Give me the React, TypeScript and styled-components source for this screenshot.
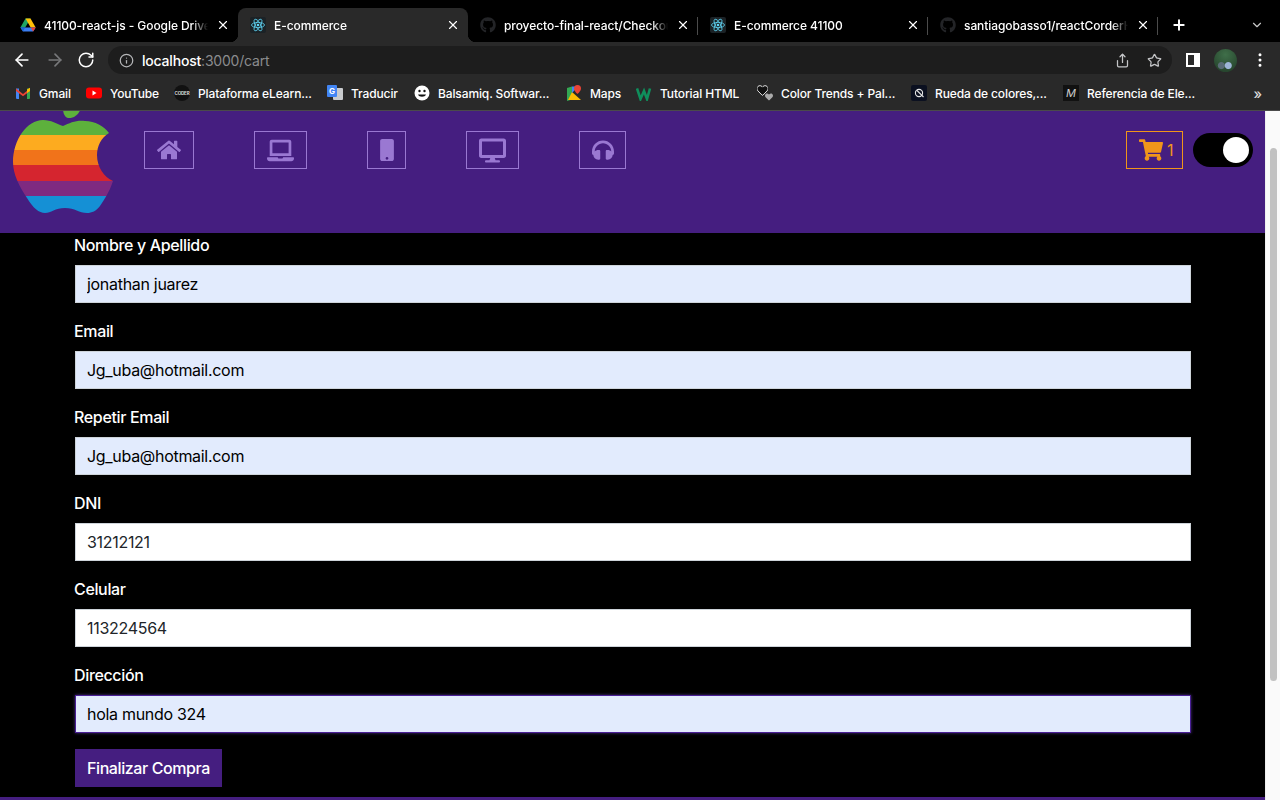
import React, { FC, ReactNode } from "react";
import styled, { createGlobalStyle } from "styled-components";
import {
  FaGithub,
  FaHeadphones,
  FaHeart,
  FaHome,
  FaLaptop,
  FaMobile,
  FaDesktop,
  FaShoppingCart,
} from "react-icons/fa";
import {
  ArrowLeft,
  ArrowRight,
  ChevronDown,
  EllipsisVertical,
  Info,
  Plus,
  RotateCw,
  Share,
  Star,
  X,
} from "lucide-react";

const PURPLE = "#451e80";
const SOFT_PURPLE = "#9a78d2";
const ORANGE = "#f0951a";
const CHROME = "#292929";

const GlobalStyle = createGlobalStyle`
  html, body {
    margin: 0;
    height: 100%;
    overflow: hidden;
    background: #000;
  }
  * { box-sizing: border-box; }
  body {
    font-family: Inter, "Liberation Sans", sans-serif;
  }
`;

const Window = styled.div`
  width: 1280px;
  height: 800px;
  display: flex;
  flex-direction: column;
  overflow: hidden;
  background: #000;
`;

/* browser chrome */

const TabStrip = styled.div`
  height: 42px;
  padding: 8px 0 0 8px;
  display: flex;
  background: #000;
  color: #fff;
`;

const Tab = styled.div<{ $active?: boolean; $divider?: boolean }>`
  position: relative;
  width: 230px;
  height: 34px;
  padding: 0 8px 0 12px;
  display: flex;
  align-items: center;
  gap: 8px;
  font-size: 12px;
  font-weight: 500;
  letter-spacing: -0.08px;
  border-radius: 8px 8px 0 0;
  background: ${(p) => (p.$active ? CHROME : "transparent")};

  ${(p) =>
    p.$divider &&
    `&::after {
      content: "";
      position: absolute;
      right: 0;
      top: 9px;
      width: 1px;
      height: 18px;
      background: #4b4b4b;
    }`}

  ${(p) =>
    p.$active &&
    `&::before, &::after {
      content: "";
      position: absolute;
      bottom: 0;
      width: 8px;
      height: 8px;
    }
    &::before {
      left: -8px;
      background: radial-gradient(circle at 0 0, transparent 8px, ${CHROME} 8.5px);
    }
    &::after {
      right: -8px;
      background: radial-gradient(circle at 100% 0, transparent 8px, ${CHROME} 8.5px);
    }`}
`;

const TabTitle = styled.span`
  flex: 1;
  min-width: 0;
  white-space: nowrap;
  overflow: hidden;
  -webkit-mask-image: linear-gradient(to right, #000 90%, transparent 100%);
  mask-image: linear-gradient(to right, #000 90%, transparent 100%);
`;

const TabClose = styled(X)`
  flex: none;
  width: 14px;
  height: 14px;
`;

const NewTab = styled(Plus)`
  margin-left: 13px;
  margin-top: 9px;
  width: 16px;
  height: 16px;
  stroke-width: 3;
`;

const TabMenu = styled(ChevronDown)`
  margin-left: 63px;
  margin-top: 10px;
  width: 14px;
  height: 14px;
  color: #c8c8c8;
`;

const Toolbar = styled.div`
  height: 37px;
  padding: 4px 0 5px 12px;
  display: flex;
  align-items: center;
  background: ${CHROME};
  color: #fff;
`;

const NavArrows = styled.div`
  width: 96px;
  display: flex;
  align-items: center;
  gap: 12.5px;
`;

const AddressBar = styled.div`
  width: 1064px;
  height: 28px;
  padding: 0 8px 0 11px;
  display: flex;
  align-items: center;
  border-radius: 14px;
  background: #1d1d1d;
  font-size: 14px;
  font-weight: 500;
  color: #fff;
`;

const Url = styled.span`
  margin-left: 8px;
  flex: 1;
  letter-spacing: -0.2px;
  span {
    color: #8b8c8e;
    font-weight: 400;
  }
`;

const BarActions = styled.div`
  display: flex;
  align-items: center;
  gap: 17px;
  padding-right: 2px;
  color: #c4c5c7;
`;

const ToolbarEnd = styled.div`
  display: flex;
  align-items: center;
  margin-left: 14px;
  gap: 14px;
`;

const SidebarIcon = styled.span`
  width: 14px;
  height: 14px;
  border: 2px solid #fff;
  border-right-width: 6px;
`;

const Avatar = styled.span`
  width: 23px;
  height: 23px;
  border-radius: 50%;
  background:
    radial-gradient(circle at 62% 72%, #9db4d6 0 3px, transparent 4px),
    radial-gradient(circle at 32% 72%, #5a6c77 0 3px, transparent 4px),
    radial-gradient(circle at 50% 25%, #3f6f49, #27452e 80%);
`;

const BookmarkBar = styled.div`
  height: 32px;
  padding: 0 0 3px 15px;
  display: flex;
  align-items: center;
  background: ${CHROME};
  border-bottom: 1px solid #4a4a4a;
  color: #fff;
  font-size: 12px;
  font-weight: 500;
  letter-spacing: -0.12px;
`;

const Bookmark = styled.div<{ $w: number }>`
  width: ${(p) => p.$w}px;
  flex: none;
  display: flex;
  align-items: center;
  gap: 8px;
  white-space: nowrap;
`;

const MoreBookmarks = styled.span`
  margin-left: auto;
  margin-right: 18px;
  font-size: 14px;
  color: #dcdcdc;
`;

const FavFrame = styled.svg`
  flex: none;
  width: 16px;
  height: 16px;
  display: block;
`;

const GithubFav = styled(FaGithub)`
  flex: none;
  width: 16px;
  height: 16px;
  color: #232427;
`;

const ReactFav: FC = () => (
  <FavFrame viewBox="0 0 16 16">
    <rect width="16" height="16" rx="2" fill="#1b2226" />
    <g fill="none" stroke="#5ed3f3" strokeWidth="0.8">
      <ellipse cx="8" cy="8" rx="6.5" ry="2.6" />
      <ellipse cx="8" cy="8" rx="6.5" ry="2.6" transform="rotate(60 8 8)" />
      <ellipse cx="8" cy="8" rx="6.5" ry="2.6" transform="rotate(120 8 8)" />
    </g>
    <circle cx="8" cy="8" r="1.3" fill="#5ed3f3" />
  </FavFrame>
);

const DriveFav: FC = () => (
  <FavFrame viewBox="0 0 16 16">
    <path d="M5.5 1.5h5L5.2 10.6H0.4z" fill="#1fa463" />
    <path d="M5.5 1.5h5l5.2 9.1h-5z" fill="#ffc107" />
    <path d="M0.4 10.6h15.3l-2.6 4H3z" fill="#3b7df0" />
    <path d="M0.4 10.6h4.8l-2.2 4z" fill="#1967d2" />
    <path d="M15.7 10.6h-4.9l2.3 4z" fill="#ea4335" />
  </FavFrame>
);

const GmailFav: FC = () => (
  <FavFrame viewBox="0 0 16 16">
    <path d="M1 3.5h3V14H2a1 1 0 0 1-1-1z" fill="#4285f4" />
    <path d="M12 3.5h3V13a1 1 0 0 1-1 1h-2z" fill="#34a853" />
    <path d="M1 3.5 8 9l7-5.500V6L8 11.300 1 6z" fill="#ea4335" />
    <path d="M12 4.500 15 2.800V6L12 8z" fill="#fbbc04" />
  </FavFrame>
);

const YoutubeFav: FC = () => (
  <FavFrame viewBox="0 0 16 16">
    <rect y="2.500" width="16" height="11" rx="3" fill="#f00" />
    <path d="M6.500 5.500 10.500 8l-4 2.500z" fill="#fff" />
  </FavFrame>
);

const CoderFav: FC = () => (
  <FavFrame viewBox="0 0 16 16">
    <circle cx="8" cy="8" r="8" fill="#111" />
    <text x="8" y="9.500" fontSize="4.500" fontWeight="700" textAnchor="middle" fill="#ddd">
      CODER
    </text>
  </FavFrame>
);

const TranslateFav: FC = () => (
  <FavFrame viewBox="0 0 16 16">
    <rect x="6" y="3" width="10" height="12" rx="1" fill="#c9cbce" />
    <rect width="10" height="12" rx="1" fill="#4285f4" />
    <text x="5" y="9" fontSize="8" fontWeight="700" textAnchor="middle" fill="#fff">
      G
    </text>
  </FavFrame>
);

const SmileFav: FC = () => (
  <FavFrame viewBox="0 0 16 16">
    <circle cx="8" cy="8" r="7.500" fill="#fff" />
    <circle cx="5.500" cy="6" r="1.200" fill="#111" />
    <circle cx="10.500" cy="6" r="1.200" fill="#111" />
    <path d="M4 9.500c1 3 7 3 8 0z" fill="#111" />
  </FavFrame>
);

const MapsFav: FC = () => (
  <FavFrame viewBox="0 0 16 16">
    <path d="M1 3 6 1.500V14.500L1 16z" fill="#34a853" />
    <path d="M6 7 15 15H2z" fill="#fbbc04" />
    <path d="M6 1.500h6L6 8z" fill="#4285f4" />
    <path d="M11.500 0a3.500 3.500 0 0 1 3.500 3.500c0 2.500-3.500 5.500-3.500 5.500S8 6 8 3.500A3.500 3.500 0 0 1 11.500 0z" fill="#ea4335" />
  </FavFrame>
);

const W3Fav: FC = () => (
  <FavFrame viewBox="0 0 16 16">
    <path d="M1 3.500 4.500 14 8 6l3 8 3-10.500" fill="none" stroke="#0f8f5c" strokeWidth="2.600" />
  </FavFrame>
);

const HeartsWrap = styled.span`
  position: relative;
  flex: none;
  width: 16px;
  height: 16px;
  color: #111;
`;

const HeartBack = styled(FaHeart)`
  position: absolute;
  left: 0;
  top: 0;
  width: 11px;
  height: 11px;
  stroke: #fff;
  stroke-width: 40;
`;

const HeartFront = styled(FaHeart)`
  position: absolute;
  right: 0;
  bottom: 0;
  width: 8px;
  height: 8px;
  color: #aaa;
`;

const RuedaFav: FC = () => (
  <FavFrame viewBox="0 0 16 16">
    <rect width="16" height="16" rx="2" fill="#0b1020" />
    <circle cx="8" cy="8" r="3.600" fill="none" stroke="#e6e6e6" strokeWidth="1.100" />
    <path d="M6 5.500 12.500 12" stroke="#e6e6e6" strokeWidth="1.100" />
  </FavFrame>
);

const MdnFav = styled.span`
  flex: none;
  width: 16px;
  height: 16px;
  background: #111;
  color: #ccc;
  font-size: 11px;
  font-style: italic;
  font-weight: 400;
  line-height: 16px;
  text-align: center;
`;

/* page */

const Viewport = styled.div`
  flex: 1;
  min-height: 0;
  display: flex;
`;

const Page = styled.div`
  width: 1265px;
  display: flex;
  flex-direction: column;
  background: #000;
`;

const Scrollbar = styled.div`
  width: 15px;
  padding: 37px 3px 0 4px;
  background: #fafafa;
  border-left: 1px solid #efefef;
`;

const Thumb = styled.div`
  height: 533px;
  border-radius: 4px;
  background: #c1c1c1;
`;

const Header = styled.header`
  height: 122px;
  padding: 0 12px 0 13px;
  display: flex;
  align-items: flex-start;
  overflow: hidden;
  background: ${PURPLE};
`;

const LogoMark = styled.svg`
  flex: none;
  width: 100px;
  height: 105px;
  margin-top: -3px;
`;

const Nav = styled.nav`
  margin: 20px 0 0 31px;
  display: flex;
  gap: 60px;
`;

const NavButton = styled.a<{ $w: number }>`
  width: ${(p) => p.$w}px;
  height: 38px;
  display: flex;
  align-items: center;
  justify-content: center;
  border: 1px solid ${SOFT_PURPLE};
  color: ${SOFT_PURPLE};
`;

const HeaderEnd = styled.div`
  margin: 20px 0 0 auto;
  display: flex;
  align-items: center;
  gap: 10px;
`;

const CartButton = styled.a`
  width: 57px;
  height: 38px;
  padding-left: 12px;
  display: flex;
  align-items: center;
  gap: 4px;
  border: 1px solid ${ORANGE};
  color: ${ORANGE};
  font-size: 16px;
`;

const Toggle = styled.div`
  width: 60px;
  height: 34px;
  padding: 4px 4px 4px 30px;
  border-radius: 17px;
  background: #000;
`;

const Knob = styled.div`
  width: 26px;
  height: 26px;
  border-radius: 50%;
  background: #fff;
`;

const Form = styled.form`
  width: 1116px;
  margin: 0 74px 0 75px;
  display: flex;
  flex-direction: column;
`;

const FieldLabel = styled.label`
  display: block;
  height: 24px;
  margin: 0 0 8px -1px;
  color: #fff;
  font-size: 16px;
  font-weight: 500;
  letter-spacing: -0.35px;
  line-height: 24px;
`;

const FieldInput = styled.input<{ $filled?: boolean; $focused?: boolean }>`
  display: block;
  width: 100%;
  height: 38px;
  margin-bottom: 16px;
  padding: 6px 11px;
  border: 1px solid ${(p) => (p.$focused ? "#4a1f96" : "#ced4da")};
  border-radius: 0;
  outline: none;
  background: ${(p) => (p.$filled ? "#e2ebfd" : "#fff")};
  box-shadow: ${(p) => (p.$focused ? "0 0 3px rgba(120, 80, 210, 0.6)" : "none")};
  color: ${(p) => (p.$filled ? "#000" : "#212529")};
  font: 16px/24px Inter, "Liberation Sans", sans-serif;
  letter-spacing: -0.3px;
`;

const SubmitButton = styled.button`
  width: 147px;
  height: 38px;
  padding: 0;
  border: none;
  background: ${PURPLE};
  color: #fff;
  font: 500 16px/24px Inter, "Liberation Sans", sans-serif;
  letter-spacing: -0.4px;
`;

const Footer = styled.footer`
  margin-top: 10px;
  height: 3px;
  flex: none;
  background: ${PURPLE};
`;

const tabs: { title: string; icon: ReactNode; active?: boolean; divider?: boolean }[] = [
  { title: "41100-react-js - Google Drive", icon: <DriveFav /> },
  { title: "E-commerce", icon: <ReactFav />, active: true },
  { title: "proyecto-final-react/Checkout", icon: <GithubFav />, divider: true },
  { title: "E-commerce 41100", icon: <ReactFav />, divider: true },
  { title: "santiagobasso1/reactCorderHouse", icon: <GithubFav />, divider: true },
];

const bookmarks: { label: string; w: number; icon: ReactNode }[] = [
  { label: "Gmail", w: 71, icon: <GmailFav /> },
  { label: "YouTube", w: 88, icon: <YoutubeFav /> },
  { label: "Plataforma eLearn...", w: 153, icon: <CoderFav /> },
  { label: "Traducir", w: 87, icon: <TranslateFav /> },
  { label: "Balsamiq. Softwar...", w: 152, icon: <SmileFav /> },
  { label: "Maps", w: 70, icon: <MapsFav /> },
  { label: "Tutorial HTML", w: 121, icon: <W3Fav /> },
  {
    label: "Color Trends + Pal...",
    w: 154,
    icon: (
      <HeartsWrap>
        <HeartBack />
        <HeartFront />
      </HeartsWrap>
    ),
  },
  { label: "Rueda de colores,...", w: 152, icon: <RuedaFav /> },
  { label: "Referencia de Ele...", w: 160, icon: <MdnFav>M</MdnFav> },
];

const navItems: { id: string; w: number; icon: ReactNode }[] = [
  { id: "home", w: 50, icon: <FaHome size={24} /> },
  { id: "laptop", w: 53, icon: <FaLaptop size={27} /> },
  { id: "mobile", w: 39, icon: <FaMobile size={22} /> },
  { id: "desktop", w: 53, icon: <FaDesktop size={27} /> },
  { id: "audio", w: 47, icon: <FaHeadphones size={22} /> },
];

const fields: { label: string; value: string; filled?: boolean; focused?: boolean }[] = [
  { label: "Nombre y Apellido", value: "jonathan juarez", filled: true },
  { label: "Email", value: "Jg_uba@hotmail.com", filled: true },
  { label: "Repetir Email", value: "Jg_uba@hotmail.com", filled: true },
  { label: "DNI", value: "31212121" },
  { label: "Celular", value: "113224564" },
  { label: "Dirección", value: "hola mundo 324", filled: true, focused: true },
];

const APPLE_BODY =
  "M50 18C57 15 63 12 72 13C82 13 91 18 96 25C88 30 84 38 84 47C84 59 91 69 100 73C96 85 91 92 87 98C83 103 79 105 74 105C66 105 62 100 52 100C42 100 38 105 32 105C26 105 20 100 14 90C6 78 0 66 0 54C0 32 14 12 30 12C38 12 44 16 50 18Z";

const AppleLogo: FC = () => (
  <LogoMark viewBox="0 0 100 105">
    <defs>
      <clipPath id="apple-body">
        <path d={APPLE_BODY} />
      </clipPath>
    </defs>
    <path d="M50 0C50 6 52 10 56 10C62 10 66 6 68 0Z" fill="#5db13c" />
    <g clipPath="url(#apple-body)">
      <rect y="0" width="100" height="27" fill="#5db13c" />
      <rect y="27" width="100" height="15" fill="#fdab1f" />
      <rect y="42" width="100" height="15" fill="#f1731a" />
      <rect y="57" width="100" height="16" fill="#d5252f" />
      <rect y="73" width="100" height="15" fill="#7f2a80" />
      <rect y="88" width="100" height="17" fill="#1590d5" />
    </g>
  </LogoMark>
);

const App: FC = () => (
  <Window>
    <GlobalStyle />
    <TabStrip>
      {tabs.map((t) => (
        <Tab key={t.title} $active={t.active} $divider={t.divider}>
          {t.icon}
          <TabTitle>{t.title}</TabTitle>
          <TabClose />
        </Tab>
      ))}
      <NewTab />
      <TabMenu />
    </TabStrip>
    <Toolbar>
      <NavArrows>
        <ArrowLeft size={20} />
        <ArrowRight size={20} color="#77787a" />
        <RotateCw size={18} />
      </NavArrows>
      <AddressBar>
        <Info size={15} color="#b5b6b8" />
        <Url>
          localhost<span>:3000/cart</span>
        </Url>
        <BarActions>
          <Share size={15} />
          <Star size={15} />
        </BarActions>
      </AddressBar>
      <ToolbarEnd>
        <SidebarIcon />
        <Avatar />
        <EllipsisVertical size={18} />
      </ToolbarEnd>
    </Toolbar>
    <BookmarkBar>
      {bookmarks.map((b) => (
        <Bookmark key={b.label} $w={b.w}>
          {b.icon}
          {b.label}
        </Bookmark>
      ))}
      <MoreBookmarks>»</MoreBookmarks>
    </BookmarkBar>
    <Viewport>
      <Page>
        <Header>
          <AppleLogo />
          <Nav>
            {navItems.map((n) => (
              <NavButton key={n.id} $w={n.w}>
                {n.icon}
              </NavButton>
            ))}
          </Nav>
          <HeaderEnd>
            <CartButton>
              <FaShoppingCart size={24} />1
            </CartButton>
            <Toggle>
              <Knob />
            </Toggle>
          </HeaderEnd>
        </Header>
        <Form>
          {fields.map((f) => (
            <div key={f.label}>
              <FieldLabel>{f.label}</FieldLabel>
              <FieldInput value={f.value} readOnly $filled={f.filled} $focused={f.focused} />
            </div>
          ))}
          <SubmitButton type="button">Finalizar Compra</SubmitButton>
        </Form>
        <Footer />
      </Page>
      <Scrollbar>
        <Thumb />
      </Scrollbar>
    </Viewport>
  </Window>
);

export default App;
